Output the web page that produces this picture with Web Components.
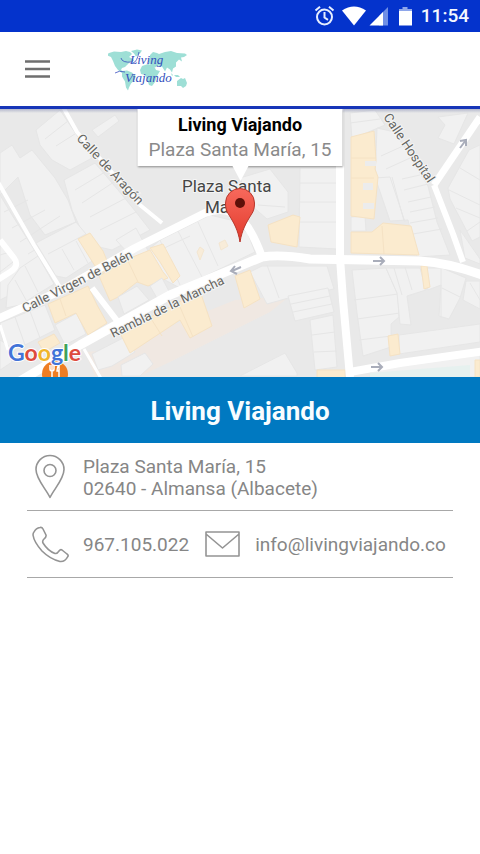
<!DOCTYPE html>
<html lang="es">
<head>
<meta charset="utf-8">
<meta name="viewport" content="width=device-width, initial-scale=1">
<title>Living Viajando</title>
<style>
  body { margin: 0; background: #fff; font-family: Roboto, "Liberation Sans", sans-serif; }
</style>
</head>
<body>
<contact-page></contact-page>

<template id="status-bar">
  <style>
    :host { display: flex; align-items: center; justify-content: flex-end; height: 32px; padding-right: 11px; background: #0433cc; color: #f4f8ff; }
    svg { display: block; }
    time { font-size: 19px; font-weight: 500; line-height: 32px; margin-left: 9px; }
  </style>
  <svg width="98" height="24" viewBox="315 4 98 24" aria-hidden="true">
    <g fill="none" stroke="#e6eeff" stroke-width="2">
      <circle cx="325.500" cy="17" r="7.500"/>
      <path d="M325.500 12v5.500l3.500 2.300M316.500 10.500l4.500-3.800M334.500 10.500l-4.500-3.800"/>
    </g>
    <path fill="#fff" d="M343 10.500Q355 2.500 367 10.500L355 25.500Z"/>
    <path fill="#6f8fe6" d="M389 7V25.500H380V16Z"/>
    <path fill="#fff" d="M384 12V25.500H370.500Z"/>
    <path fill="#8ea6ea" d="M403.500 7h5v2h-5zM400 9h13v3h-13z"/>
    <path fill="#fff" d="M400 11h13v14.500h-13z"/>
  </svg>
  <time>11:54</time>
</template>

<template id="app-bar">
  <style>
    :host { display: flex; align-items: center; gap: 52px; height: 74px; padding: 0 19px; background: #fff; border-bottom: 3px solid #1735b8; position: relative; }
    button { width: 37px; height: 40px; padding: 0; border: 0; background: none; display: grid; place-items: center; cursor: pointer; }
    svg { display: block; }
  </style>
  <button type="button" aria-label="Menú">
    <svg width="26" height="18" viewBox="0 0 26 18" aria-hidden="true"><path d="M0 1.500h25M0 9h25M0 16.500h25" stroke="#6f6f6f" stroke-width="2.500"/></svg>
  </button>
  <svg width="80" height="44" viewBox="107 49 80 44" role="img" aria-label="Living Viajando">
    <g fill="#9edfd6">
      <path d="M108 55l5-1.500 7 .5 5-1 4 1 2 2-3 3 4 2 1 2-4 1-3 3-2 2-3 1-1 2 3 2 2 2-4-1-4-3-3-4-2-5-2-4-5-2z"/>
      <path d="M130 53l6-1.500 5 1-2 3-4 3-2-3z"/>
      <path d="M121 73l5-.5 5 2 4 4-2 4-3 3-2 4-1 3-2-3-1-6-3-5z"/>
      <path d="M149 57l3-3 4 1 2 1 6-2 6-1 6 2 8 .5 2 1.500-3 2-3 .5 1 4-3-2-3 3 0 4-3 2-1 4-2-3-3-2-2 4-3-5-4-1-3 2-4-2-3-4 2-4z"/>
      <path d="M141 68l6-2 6 2 2 4 4 1-3 5-2 6-3 4-3-1-2-6-2-4-4-1-1-4z"/>
      <path d="M170 75l2 2-1 1zM173 77l4 0 2 2-4 0zM176 83l4-3 2 1 2-1 2 5-1 3-3 2-2-2-4 0z"/>
    </g>
    <g font-family="'URW Chancery L','Liberation Serif',serif" font-style="italic" font-size="13" fill="#3450bd">
      <text x="129" y="66">Living</text>
      <text x="124" y="84">Viajando</text>
    </g>
    <path d="M120 60q1 5 11 4M132 65q4-1 6-11M114 75q4-3 10-1" fill="none" stroke="#3b4fc0" stroke-width=".8"/>
  </svg>
</template>

<template id="street-map">
  <style>
    :host { display: grid; position: relative; aspect-ratio: 480 / 268; overflow: hidden; background: #e9e9e9; }
    svg { display: block; width: 100%; height: 100%; }
    aside { position: absolute; top: 0; left: 50%; transform: translateX(-50%); box-sizing: border-box; padding: 3px 11px 4px; background: #fff; box-shadow: 0 1px 2px #0006; text-align: center; white-space: nowrap; }
    aside::after { content: ""; position: absolute; left: 50%; top: 100%; margin-left: -8px; border: 8px solid transparent; border-top: 15px solid #fff; border-bottom: 0; }
    strong, span { display: block; line-height: 25px; }
    strong { font-size: 18px; font-weight: 700; color: #000; }
    span { font-size: 19px; color: #8a8a8a; }
    .pin { position: absolute; left: 50%; top: 29%; width: 32px; height: 58px; margin-left: -16px; }
  </style>
  <svg viewBox="0 109 480 268" preserveAspectRatio="xMidYMid slice" role="img" aria-label="Mapa">
    <rect x="0" y="100" width="480" height="280" fill="#e9e9e9"/>
    <path fill="#f0e8e2" d="M112 350L235 300 290 296 270 312 170 362 140 376H95L85 352Z"/>
    <g fill="#f1f1f1" stroke="#e6e6e6" stroke-width="1">
      <path d="M0 153L12 145 20 158 32 150 55 178 68 200 76 222 45 235 30 215 18 177 0 195Z"/>
      <path d="M0 195L12 215 28 240 50 275 20 290 0 300ZM4 212L28 200M12 228L45 210M20 242L60 216M28 254L58 236"/>
      <path d="M36 130L60 110 76 134 92 158 70 170 52 160 40 145Z M45 139L68 121M56 146L78 132"/>
      <path d="M64 180L95 163 118 190 136 212 150 230 112 250 95 246 82 232 72 210ZM75 190L105 172M82 203L114 182M90 217L126 198M100 230L136 212"/>
      <path d="M92 130L115 115 119 121 98 137Z"/>
      <path d="M36 243L76 222 86 234 100 256 66 278 56 276ZM48 254L86 234M62 249L74 270M76 241L88 263"/>
      <path d="M0 255L10 252 13 262 0 272Z"/>
      <path d="M8 285L20 268 38 256 54 284 20 305 6 308ZM25 266L38 292M15 280L26 300"/>
      <path d="M0 323L45 305 55 330 5 355Z M15 317L25 345M30 311L40 338"/>
      <path d="M55 325L77 313 86 334 65 345Z"/>
      <path d="M0 340L8 345 12 362 0 370Z"/>
      <path d="M92 354L123 338 135 352 112 366 98 370Z"/>
      <path d="M121 365L145 353 153 364 140 376H122Z"/>
      <path d="M116 240L136 228 154 262 142 268Z"/>
      <path d="M135 262L160 240 210 215 235 221 248 234 255 252 222 268 180 288 165 280ZM160 240L180 285M178 231L202 277M198 222L218 266M160 250L190 236"/>
      <path d="M262 266L327 266 334 289 292 297 267 304 250 272ZM267 265L279 298"/>
      <path d="M288 296L328 288 334 312 295 321ZM291 304L330 296M293 312L332 304"/>
      <path d="M310 320L333 315 337 367 315 370ZM312 335L335 332M314 352L337 351"/>
      <path d="M240 376L285 353 297 373 297 376Z"/>
      <path d="M300 168H337V249L299 247ZM300 183H337M300 202H337M300 222H337"/>
      <path d="M240 178L270 169 288 192 288 212 267 219 252 206ZM258 205L285 207"/>
      <path d="M350 113L375 110 385 125 352 139ZM350 123L380 119"/>
      <path d="M377 128L395 132 428 186 437 222 450 255 417 257 408 220 390 221 375 177Z M381 156L403 146M386 169L410 158M392 177L404 221M402 179L420 175M404 190L428 184M408 202L431 197M410 212L435 207M410 223L438 218M413 234L442 229M374 178L390 177L405 222"/>
      <path d="M351 217L365 216 366 231 351 231Z"/>
      <path d="M438 117L468 113 454 144 438 138 445 125Z"/>
      <path d="M480 145L469 150 448 188 450 199 472 241 480 237ZM460 168L480 180M449 190L480 205M456 208L480 218M467 231L480 222"/>
      <path d="M460 230L480 259V264L465 258Z"/>
      <path d="M352 270L386 268 398 295 399 317 391 324 391 347 363 356 357 313Z M354 300L398 294M357 319L400 313M359 340L391 336"/>
      <path d="M386 268H420L426 290 407 296 411 325 400 324 397 293ZM394 268L402 295M405 267L412 290"/>
      <path d="M424 268H442L466 278 460 298 449 319 439 316 441 285 428 290ZM441 268V318M442 288L460 297"/>
      <path d="M466 281L480 281V309L463 300ZM470 283L480 300"/>
      <path d="M399 335L480 324V342L399 354Z"/>
      <path d="M372 368L480 354V377H370Z"/>
    </g>
    <path fill="#e6f1ef" d="M370 373L470 365V377H370Z"/>
    <g fill="#fbebcf" stroke="#f5e2c4" stroke-width="1">
      <path d="M78 239L90 233 103 251 110 268 100 274 90 258Z"/>
      <path d="M99 276L128 259 150 250 163 272 168 278 148 286 137 282 118 297 110 301ZM128 261L138 282"/>
      <path d="M150 248L163 244 180 276 173 283 160 262Z"/>
      <path d="M48 304L88 286 97 305 107 323 88 335 76 313 55 323ZM60 299L66 316"/>
      <path d="M38 342L54 334 60 343 44 352Z"/>
      <path d="M120 333L200 291 212 326 190 338 180 320 130 353ZM150 317L162 336M180 307L193 337"/>
      <path d="M235 276L250 270 260 299 244 308Z"/>
      <path d="M268 225L293 215 300 217 297 247 271 242Z"/>
      <path d="M351 137L374 131 376 160 375 169 378 177 374 219 351 216ZM351 158H376M351 178H374"/>
      <path d="M351 232L372 232 383 223 411 226 419 255 351 253ZM382 226L384 254"/>
      <path d="M421 266H427L430 287 424 289Z"/>
      <path d="M388 336L398 334 400 354 390 356Z"/>
      <path d="M317 370H345V378H317ZM475 360H480V377H475Z"/>
      <path d="M200 247L204 250 200 260 197 252ZM219 243L225 240 228 246 221 250Z" opacity=".7"/>
    </g>
    <path fill="#f1f1f1" stroke="#e6e6e6" d="M118 297L137 286 149 300 124 314ZM150 286L162 278 170 293 158 300Z"/>
    <path fill="#ececec" d="M365 161h11v5h-11zM363 183h10v7h-10zM363 203h11v6h-11z"/>
    <g fill="none" stroke="#fff" stroke-linejoin="round">
      <path stroke-width="4" d="M62 105L77 132 140 205 162 223M-2 182L34 245 61 289"/>
      <path stroke-width="6" d="M434 185L453 234 463 262M0 240L14 258Q20 266 10 272L-4 281M92 288L118 322"/>
      <path stroke-width="7" d="M480 117L434 185"/>
      <path stroke-width="8" d="M-5 320L60 291 135 248 205 213Q228 204 243 221 253 232 262 257"/>
      <path stroke-width="9" d="M20 381L80 345 170 295 262 257Q280 254 310 259L420 261Q450 263 485 276"/>
      <path stroke-width="8" d="M340 105V258L343 300 350 377M350 372L400 363 485 351"/>
      <path stroke-width="3" d="M84 349L102 380M0 325L8 350"/>
    </g>
    <g fill="none" stroke="#a9adba" stroke-width="2">
      <path d="M373 261h11M380 257l4 4-4 4M371 367h11M378 363l4 4-4 4M241 267l-9 4M235 266l-4 5 6 3M460 148l6-8M460 141l6-1 0 6"/>
    </g>
    <g font-family="Roboto, 'Liberation Sans', sans-serif" fill="#666661" stroke="#f5f5f5" stroke-width="2" paint-order="stroke" font-size="14">
      <text transform="translate(76 139) rotate(47)" font-size="13">Calle de Aragón</text>
      <text transform="translate(25 313) rotate(-27)" font-size="13">Calle Virgen de Belén</text>
      <text transform="translate(113 338) rotate(-26)" font-size="13">Rambla de la Mancha</text>
      <text transform="translate(383 117) rotate(56)" font-size="13">Calle Hospital</text>
      <g font-size="17" fill="#454545"><text x="182" y="192">Plaza Santa</text><text x="205" y="213">María</text></g>
    </g>
    <circle cx="55" cy="374" r="13" fill="#ee7d22"/>
    <path d="M50 365v4q0 2 2 2v6M54 365v4q0 2-2 2M52 365v6M59 377v-12q-2 2-2 6h2" fill="none" stroke="#fff" stroke-width="1.500"/>
    <text x="8" y="361" font-family="Lato, 'Open Sans', sans-serif" font-size="23" font-weight="700" stroke="#fff" stroke-width="2" paint-order="stroke"><tspan fill="#4274d8">G</tspan><tspan fill="#dd4b3e">o</tspan><tspan fill="#efb52c">o</tspan><tspan fill="#4274d8">g</tspan><tspan fill="#3fa35a">l</tspan><tspan fill="#dd4b3e">e</tspan></text>
    <linearGradient id="shade" x1="0" y1="0" x2="0" y2="1"><stop stop-color="#8088b0" stop-opacity=".5"/><stop offset="1" stop-color="#8088b0" stop-opacity="0"/></linearGradient>
    <rect x="0" y="109" width="480" height="4" fill="url(#shade)"/>
  </svg>
  <aside><strong>Living Viajando</strong><span>Plaza Santa María, 15</span></aside>
  <svg class="pin" viewBox="0 0 32 58" aria-hidden="true">
    <linearGradient id="red" x1="0" y1="0" x2="0" y2="1"><stop stop-color="#f7695c"/><stop offset="1" stop-color="#e23a2c"/></linearGradient>
    <path d="M16 55C14 43 10 36 5 28 2 24 1.500 20 1.500 16a14.500 14.500 0 0 1 29 0C30.500 20 30 24 27 28 22 36 18 43 16 55Z" fill="url(#red)" stroke="#b8382d" stroke-width="1"/>
    <circle cx="16" cy="16" r="5" fill="#5e1009"/>
  </svg>
</template>

<template id="section-title">
  <style>
    :host { display: block; background: #0079c1; padding: 18px 16px 16px; margin-bottom: 1px; }
    h1 { margin: 0; font-size: 26px; line-height: 32px; font-weight: 700; color: #f8fdff; text-align: center; }
  </style>
  <h1><slot></slot></h1>
</template>

<template id="contact-row">
  <style>
    :host { display: flex; align-items: center; box-sizing: border-box; min-height: 67px; margin: 0 27px; border-bottom: 1px solid #a8a8a8; gap: 16px; }
  </style>
  <slot></slot>
</template>

<template id="contact-item">
  <style>
    :host { display: flex; align-items: center; gap: 10px; font-size: 19px; line-height: 22px; color: #868686; white-space: nowrap; }
    .icon { display: grid; place-items: center; width: 46px; }
    :host([kind="mail"]) { gap: 15px; }
    :host([kind="mail"]) .icon { width: 35px; }
    svg { display: none; fill: none; stroke: #949494; stroke-width: 1.600; stroke-linejoin: round; }
    :host([kind="place"]) .place, :host([kind="phone"]) .phone, :host([kind="mail"]) .mail { display: block; }
    ::slotted(*) { color: inherit; font-style: normal; text-decoration: none; padding-top: 1px; }
  </style>
  <span class="icon">
    <svg class="place" width="32" height="46" viewBox="0 0 32 46" aria-hidden="true"><path d="M16 43.500C12 35 2 25 2 15.500A14 14 0 0 1 30 15.500C30 25 20 35 16 43.500Z"/><circle cx="16" cy="16.500" r="6"/></svg>
    <svg class="phone" width="37" height="37" viewBox="0 0 37 37" aria-hidden="true"><path d="M2 6Q4 2 8 1.500 10 1 11 3L14 9Q14.500 11 12 13 10 15 11 17 16 25 23 27.500 25 28 27 25 28.500 23 30 24L35 28Q37 29.500 35.500 31 33 36 28 35.500 18 33 10 25 2 16 1 9Q1 7 2 6Z"/></svg>
    <svg class="mail" width="35" height="26" viewBox="0 0 35 26" aria-hidden="true"><path d="M1 1H34V25H1ZM1 3L17.500 17 34 3"/></svg>
  </span>
  <slot></slot>
</template>

<template id="contact-page">
  <style>
    :host { display: flex; flex-direction: column; min-height: 100vh; background: #fff; }
  </style>
  <status-bar></status-bar>
  <app-bar></app-bar>
  <street-map></street-map>
  <section-title>Living Viajando</section-title>
  <contact-row>
    <contact-item kind="place"><address>Plaza Santa María, 15<br>02640 - Almansa (Albacete)</address></contact-item>
  </contact-row>
  <contact-row>
    <contact-item kind="phone"><a href="tel:967105022">967.105.022</a></contact-item>
    <contact-item kind="mail"><a href="mailto:info@livingviajando.co">info@livingviajando.co</a></contact-item>
  </contact-row>
</template>

<script>
  class TemplateElement extends HTMLElement {
    constructor() {
      super();
      const template = document.getElementById(this.localName);
      this.attachShadow({ mode: "open" }).append(template.content.cloneNode(true));
    }
  }
  for (const name of ["status-bar", "app-bar", "street-map", "section-title", "contact-row", "contact-item", "contact-page"]) {
    customElements.define(name, class extends TemplateElement {});
  }
</script>
</body>
</html>
